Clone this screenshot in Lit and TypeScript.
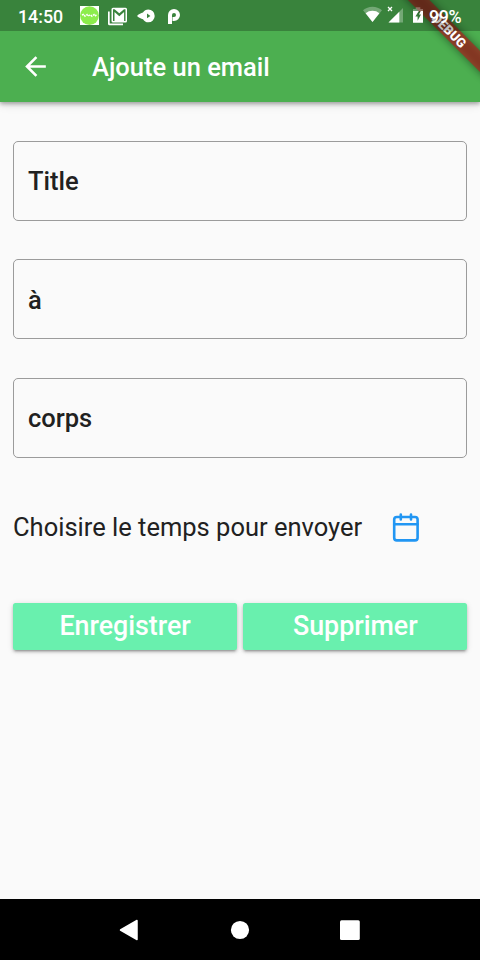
import { LitElement, html, css, svg } from "lit";
import { customElement } from "lit/decorators.js";

@customElement("app-root")
export class AppRoot extends LitElement {
  static styles = css`
    :host {
      display: flex;
      flex-direction: column;
      position: relative;
      width: 480px;
      height: 960px;
      overflow: hidden;
      background: #fafafa;
      color: #212121;
      font-family: Roboto, "Liberation Sans", sans-serif;
      font-size: 25.5px;
    }
    svg { display: block; }
    .top {
      height: 102px;
      flex: none;
      background: #4caf50;
      box-shadow: 0 2px 4px rgba(0, 0, 0, 0.3), 0 2px 10px rgba(0, 0, 0, 0.12);
    }
    .status {
      position: relative;
      z-index: 2;
      height: 31px;
      box-sizing: border-box;
      padding: 1px 18px 0;
      background: rgba(0, 0, 0, 0.25);
      color: #fff;
      display: flex;
      align-items: center;
      font-size: 17.8px;
      font-weight: 500;
    }
    .clock { width: 62px; }
    .left { width: 102px; height: 20px; }
    .right { width: 64px; height: 20px; margin-left: auto; }
    .percent { width: 33px; margin-left: 2px; letter-spacing: -0.3px; }
    .appbar {
      height: 71px;
      display: flex;
      align-items: center;
      padding-left: 20px;
      color: #fff;
    }
    .title {
      margin: 0 0 0 41px;
      font-size: 25.5px;
      font-weight: 500;
      line-height: 30px;
    }
    .banner {
      position: absolute;
      z-index: 1;
      top: 0;
      right: 0;
    }
    .banner text { font-size: 13px; font-weight: 900; }
    .body {
      flex: 1;
      padding: 39px 12.6px 0 13px;
    }
    .field {
      height: 80px;
      box-sizing: border-box;
      border: 1.27px solid #9b9b9b;
      border-radius: 5px;
      padding: 0.4px 0 0 14px;
      display: flex;
      align-items: center;
      font-weight: 500;
      margin-bottom: 38.45px;
    }
    .when {
      height: 61px;
      margin-top: 38px;
      display: flex;
      align-items: center;
    }
    .when span { width: 376.5px; }
    .actions {
      display: flex;
      gap: 6px;
      margin-top: 45.9px;
    }
    button {
      flex: 1;
      height: 46.7px;
      border: 0;
      border-radius: 2.5px;
      padding: 0 0 0.4px;
      background: #69f0ae;
      color: #fff;
      font: 500 26.8px Roboto, "Liberation Sans", sans-serif;
      box-shadow: 0 3px 2px -2px rgba(0, 0, 0, 0.2), 0 2px 3px rgba(0, 0, 0, 0.2),
        0 1px 6px rgba(0, 0, 0, 0.12);
    }
    .nav {
      height: 61px;
      flex: none;
      background: #000;
    }
  `;

  private leftIcons() {
    return svg`<svg class="left" width="102" height="20" viewBox="80 5 102 20" fill="#fff">
      <rect x="80" y="5" width="19" height="19"/>
      <circle cx="89.5" cy="14.600" r="9.4" fill="#8ced4c"/>
      <path d="M82 14l2-.8 1 2 2-1.500 1 1.500 2-1.500 2 1.500 2-1.500 1 1.500 2-2" fill="none" stroke="#fff" stroke-width="1.500" stroke-dasharray="2 1"/>
      <path d="M108 10.500h1.700v12H123v1.700h-13.500a1.500 1.500 0 0 1-1.500-1.500z"/>
      <path fill-rule="evenodd" d="M113 6.700h12.500a1.500 1.500 0 0 1 1.500 1.500v11.800a1.500 1.500 0 0 1-1.500 1.500H113a1.500 1.500 0 0 1-1.500-1.500v-11.800A1.500 1.500 0 0 1 113 6.700zm0 1.600v11.600h1.500v-8.900l4.800 4.200 4.800-4.200v8.900h1.400V8.300h-1.500l-4.700 4-4.700-4z"/>
      <path fill-rule="evenodd" d="M137 14.900c2-1.800 4-2.600 6-3.300 1.200-2 3-3.100 5.300-3.100a6.400 6.400 0 0 1 0 12.800c-2.300 0-4.100-1.100-5.300-3.100-2-.7-4-1.500-6-3.300zm10-2.400v4.800l3.400-2.400z"/>
      <path d="M170 23v-9a4 4 0 1 1 4 4h-1.500" fill="none" stroke="#fff" stroke-width="4"/>
    </svg>`;
  }

  private rightIcons() {
    return svg`<svg class="right" width="64" height="20" viewBox="363 6 64 20" fill="#fff">
      <path d="M363 10.300a14.500 14.500 0 0 1 19 0L372.500 22z" opacity=".3"/>
      <path d="M365.600 13.300a11 11 0 0 1 13.800 0L372.500 22z"/>
      <path d="M403 8v14.500h-14.500z" opacity=".3"/>
      <path d="M399.300 11.700v10.800H388.500z"/>
      <path d="M388 7l4 4m0-4-4 4" stroke="#fff" stroke-width="1.300"/>
      <path d="M413 11V9h2.700V7.300h4.600V9h2.700v2z" opacity=".3"/>
      <path fill-rule="evenodd" d="M413 11h5.800l-3.400 5.400h2.200v4.400l3.400-6.200h-2l1.700-3.600h2.300v11.700h-10z"/>
    </svg>`;
  }

  render() {
    return html`
      <header class="top">
        <div class="status">
          <span class="clock">14:50</span>
          ${this.leftIcons()} ${this.rightIcons()}
          <span class="percent">99%</span>
        </div>
        <div class="appbar">
          <svg width="31" height="31" viewBox="0 0 24 24" fill="#fff">
            <path d="M20 11H7.830l5.590-5.590L12 4l-8 8 8 8 1.410-1.410L7.830 13H20v-2z" />
          </svg>
          <h1 class="title">Ajoute un email</h1>
        </div>
      </header>
      <svg class="banner" width="90" height="90" viewBox="-90 0 90 90">
        <defs>
          <filter id="soft" x="-30%" y="-150%" width="160%" height="400%">
            <feGaussianBlur stdDeviation="4.500" />
          </filter>
        </defs>
        <g transform="rotate(45)">
          <rect x="-60" y="35.800" width="120" height="15.200" fill="#000" opacity=".46" filter="url(#soft)" />
          <rect x="-60" y="35.800" width="120" height="15.200" fill="#b71c1c" opacity=".63" />
          <text x="0" y="48" text-anchor="middle" fill="#fff">DEBUG</text>
        </g>
      </svg>
      <main class="body">
        <div class="field">Title</div>
        <div class="field">à</div>
        <div class="field">corps</div>
        <div class="when">
          <span>Choisire le temps pour envoyer</span>
          <svg width="32" height="32" viewBox="390 511.500 32 32" fill="none" stroke="#2196f3" stroke-width="2.600" stroke-linecap="round">
            <rect x="394.200" y="517.500" width="23.400" height="23.400" rx="2.600" />
            <path d="M394.200 524.800h23.400M400.800 515v5M411 515v5" />
          </svg>
        </div>
        <div class="actions">
          <button>Enregistrer</button>
          <button>Supprimer</button>
        </div>
      </main>
      <footer class="nav">
        <svg width="480" height="61" viewBox="0 899 480 61" fill="#fff">
          <path d="M120.500 930l16.500-9.500v19z" stroke="#fff" stroke-width="1.500" stroke-linejoin="round" />
          <circle cx="240" cy="930" r="9.100" />
          <rect x="340" y="920.200" width="19.800" height="19.800" rx="1.500" />
        </svg>
      </footer>
    `;
  }
}
